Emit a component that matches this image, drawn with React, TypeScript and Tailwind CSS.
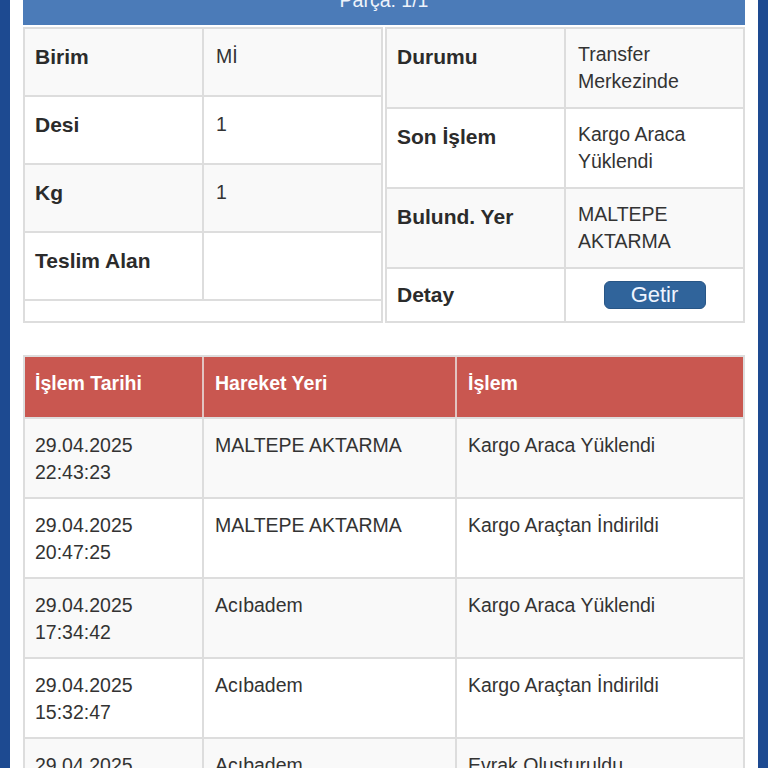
import React from "react";

const F = { fontFamily: '"Liberation Sans", Arial, Helvetica, sans-serif' };

type InfoRow = { label: string; value?: string[]; button?: boolean; gray: boolean };

const leftRows: InfoRow[] = [
  { label: "Birim", value: ["Mİ"], gray: true },
  { label: "Desi", value: ["1"], gray: false },
  { label: "Kg", value: ["1"], gray: true },
  { label: "Teslim Alan", value: [], gray: false },
];

const rightRows: InfoRow[] = [
  { label: "Durumu", value: ["Transfer", "Merkezinde"], gray: true },
  { label: "Son İşlem", value: ["Kargo Araca", "Yüklendi"], gray: false },
  { label: "Bulund. Yer", value: ["MALTEPE", "AKTARMA"], gray: true },
  { label: "Detay", button: true, gray: false },
];

const moves = [
  { d: "29.04.2025", t: "22:43:23", p: "MALTEPE AKTARMA", a: "Kargo Araca Yüklendi" },
  { d: "29.04.2025", t: "20:47:25", p: "MALTEPE AKTARMA", a: "Kargo Araçtan İndirildi" },
  { d: "29.04.2025", t: "17:34:42", p: "Acıbadem", a: "Kargo Araca Yüklendi" },
  { d: "29.04.2025", t: "15:32:47", p: "Acıbadem", a: "Kargo Araçtan İndirildi" },
  { d: "29.04.2025", t: "15:20:11", p: "Acıbadem", a: "Evrak Oluşturuldu" },
];

export default function App() {
  return (
    <div className="flex min-h-screen bg-white text-[#333]" style={F}>
      <div className="w-[10px] shrink-0 bg-[#1d4a91]" />
      <div className="flex-1 px-[13px] pb-10">
        {/* header */}
        <div className="-mt-[24px] h-[49px] bg-[#4b7bb8] pt-[10px] text-center text-[19.5px] leading-[28px] text-[#eef3fb]">
          Parça: 1/1
        </div>

        {/* info panels */}
        <div className="mt-[2px] flex gap-[2px]">
          <div className="w-[360px] border-2 border-[#dddddd] bg-white">
            {leftRows.map((r) => (
              <div
                key={r.label}
                className={`flex h-[68px] border-b-2 border-[#dddddd] ${r.gray ? "bg-[#f9f9f9]" : "bg-white"}`}
              >
                <div className="w-[179px] shrink-0 border-r-2 border-[#dddddd] px-[10px] pt-[14px] text-[21px] font-bold leading-[27px] text-[#2b2b2b]">
                  {r.label}
                </div>
                <div className="flex-1 px-[12px] pt-[14px] text-[19.5px] leading-[27px]">
                  {r.value?.map((v) => (
                    <div key={v}>{v}</div>
                  ))}
                </div>
              </div>
            ))}
          </div>
          <div className="w-[360px] border-2 border-[#dddddd] bg-white">
            {rightRows.map((r, i) => (
              <div
                key={r.label}
                className={`flex ${i < 3 ? "h-[80px] border-b-2 border-[#dddddd]" : "h-[52px]"} ${r.gray ? "bg-[#f9f9f9]" : "bg-white"}`}
              >
                <div
                  className={`w-[179px] shrink-0 border-r-2 border-[#dddddd] px-[10px] ${i < 3 ? "pt-[14px]" : "pt-[12px]"} text-[21px] font-bold leading-[27px] text-[#2b2b2b]`}
                >
                  {r.label}
                </div>
                {r.button ? (
                  <div className="flex flex-1 justify-center pt-[12px]">
                    <button className="h-[28px] w-[102px] rounded-[6px] border border-[#285686] bg-[#30649b] text-[22px] leading-[26px] text-[#eef4ff]">
                      Getir
                    </button>
                  </div>
                ) : (
                  <div className="flex-1 px-[12px] pt-[12px] text-[19.5px] leading-[27px]">
                    {r.value?.map((v) => (
                      <div key={v}>{v}</div>
                    ))}
                  </div>
                )}
              </div>
            ))}
          </div>
        </div>

        {/* movements table */}
        <div className="mt-[32px] border-2 border-b-0 border-[#dddddd]">
          <div className="flex h-[62px] border-b-2 border-[#dddddd] bg-[#c95750] text-[19.5px] font-bold leading-[28px] text-white">
            <div className="w-[179px] shrink-0 border-r-2 border-[#e2c4c1] px-[10px] pt-[12px]">İşlem Tarihi</div>
            <div className="w-[253px] shrink-0 border-r-2 border-[#e2c4c1] px-[11px] pt-[12px]">Hareket Yeri</div>
            <div className="flex-1 px-[11px] pt-[12px]">İşlem</div>
          </div>
          {moves.map((m, i) => (
            <div
              key={i}
              className={`flex h-[80px] border-b-2 border-[#dddddd] text-[19.5px] leading-[27px] ${i % 2 === 0 ? "bg-[#f9f9f9]" : "bg-white"}`}
            >
              <div className="w-[179px] shrink-0 border-r-2 border-[#dddddd] px-[10px] pt-[13px]">
                <div>{m.d}</div>
                <div>{m.t}</div>
              </div>
              <div className="w-[253px] shrink-0 border-r-2 border-[#dddddd] px-[11px] pt-[13px]">{m.p}</div>
              <div className="flex-1 px-[11px] pt-[13px]">{m.a}</div>
            </div>
          ))}
        </div>
      </div>
      <div className="w-[10px] shrink-0 bg-[#1d4a91]" />
    </div>
  );
}
